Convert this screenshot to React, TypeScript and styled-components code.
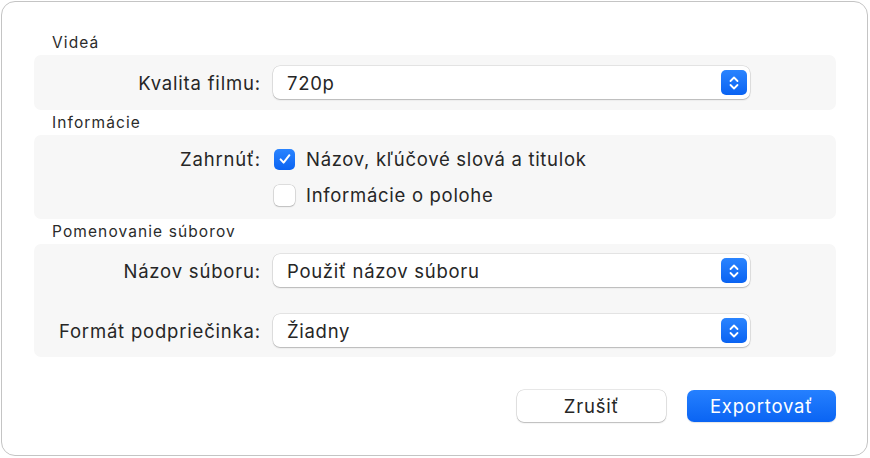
import styled, { createGlobalStyle } from "styled-components";

const GlobalStyle = createGlobalStyle`
  html, body {
    margin: 0;
    padding: 0;
    background: #ffffff;
  }
  body {
    font-family: Inter, "Liberation Sans", sans-serif;
    color: #262626;
  }
`;

const StepperIcon = () => (
  <svg width="12" height="16" viewBox="0 0 12 16" fill="none">
    <path d="M2.5 6 L6 2.5 L9.5 6" stroke="#fff" strokeWidth="1.8" strokeLinecap="round" strokeLinejoin="round" />
    <path d="M2.5 10 L6 13.5 L9.5 10" stroke="#fff" strokeWidth="1.8" strokeLinecap="round" strokeLinejoin="round" />
  </svg>
);

const CheckIcon = () => (
  <svg width="14" height="14" viewBox="0 0 14 14" fill="none">
    <path d="M2.6 7.4 L5.6 10.6 L11.4 3.2" stroke="#fff" strokeWidth="2" strokeLinecap="round" strokeLinejoin="round" />
  </svg>
);

const Select = ({ value }: { value: string }) => (
  <SelectBox>
    <SelectValue>{value}</SelectValue>
    <Stepper>
      <StepperIcon />
    </Stepper>
  </SelectBox>
);

const Checkbox = ({ checked, label }: { checked?: boolean; label: string }) => (
  <CheckRow>
    <Box $checked={checked}>{checked && <CheckIcon />}</Box>
    <CheckLabel>{label}</CheckLabel>
  </CheckRow>
);

const App = () => {
  return (
    <>
      <GlobalStyle />
      <Dialog>
        <SectionTitle>Videá</SectionTitle>
        <Group $pad="11px">
          <Row>
            <Label>Kvalita filmu:</Label>
            <Select value="720p" />
          </Row>
        </Group>

        <SectionTitle>Informácie</SectionTitle>
        <Group $pad="13px">
          <Row>
            <Label>Zahrnúť:</Label>
            <Checkbox checked label="Názov, kľúčové slová a titulok" />
          </Row>
          <Row $gap="14px">
            <Label />
            <Checkbox label="Informácie o polohe" />
          </Row>
        </Group>

        <SectionTitle>Pomenovanie súborov</SectionTitle>
        <Group $pad="10px">
          <Row>
            <Label>Názov súboru:</Label>
            <Select value="Použiť názov súboru" />
          </Row>
          <Row $gap="27px">
            <Label>Formát podpriečinka:</Label>
            <Select value="Žiadny" />
          </Row>
        </Group>

        <Footer>
          <Button>Zrušiť</Button>
          <Button $primary>Exportovať</Button>
        </Footer>
      </Dialog>
    </>
  );
};

export default App;

const Dialog = styled.div`
  box-sizing: border-box;
  margin: 1px 0 0 1px;
  width: 867px;
  height: 455px;
  border: 1.5px solid #c4c4c4;
  border-radius: 14px;
  background: #ffffff;
  padding: 32px 31px 0 32px;
  display: flex;
  flex-direction: column;
`;

const SectionTitle = styled.div`
  font-size: 15.5px;
  line-height: 18px;
  letter-spacing: 1.1px;
  color: #2b2b2b;
  padding-left: 18px;
  margin-bottom: 3px;
  margin-top: 4px;
  &:first-child {
    margin-top: 0;
  }
`;

const Group = styled.div<{ $pad: string }>`
  background: #f7f7f7;
  border-radius: 7px;
  padding: ${(p) => p.$pad} 0;
  display: flex;
  flex-direction: column;
`;

const Row = styled.div<{ $gap?: string }>`
  display: grid;
  grid-template-columns: 226px 477px;
  column-gap: 13px;
  align-items: center;
  margin-top: ${(p) => p.$gap || "0"};
`;

const Label = styled.div`
  text-align: right;
  font-size: 18.5px;
  letter-spacing: 0.8px;
  line-height: 22px;
  color: #262626;
  margin-right: -0.8px;
`;

const SelectBox = styled.div`
  box-sizing: border-box;
  height: 33px;
  background: #ffffff;
  border-radius: 7px;
  box-shadow: 0 0 0 0.5px rgba(0, 0, 0, 0.15), 0 1px 1.5px rgba(0, 0, 0, 0.2);
  display: flex;
  align-items: center;
  padding: 0 3px 0 14px;
`;

const SelectValue = styled.div`
  flex: 1;
  font-size: 18.5px;
  letter-spacing: 0.7px;
  color: #262626;
`;

const Stepper = styled.div`
  width: 26px;
  height: 25px;
  border-radius: 5px;
  background: linear-gradient(#2a84ff, #0a63f2);
  display: flex;
  align-items: center;
  justify-content: center;
`;

const CheckRow = styled.div`
  display: flex;
  align-items: center;
  gap: 11px;
`;

const Box = styled.div<{ $checked?: boolean }>`
  box-sizing: border-box;
  width: 21px;
  height: 21px;
  border-radius: 5px;
  margin-left: 1px;
  display: flex;
  align-items: center;
  justify-content: center;
  background: ${(p) => (p.$checked ? "linear-gradient(#2a84ff, #0a63f2)" : "#ffffff")};
  box-shadow: ${(p) =>
    p.$checked ? "none" : "0 0 0 0.5px rgba(0, 0, 0, 0.2), 0 1px 1.5px rgba(0, 0, 0, 0.15)"};
`;

const CheckLabel = styled.div`
  font-size: 18.5px;
  letter-spacing: 0.7px;
  line-height: 22px;
  color: #262626;
`;

const Footer = styled.div`
  display: flex;
  justify-content: flex-end;
  gap: 21px;
  margin-top: 33px;
`;

const Button = styled.button<{ $primary?: boolean }>`
  box-sizing: border-box;
  width: 149px;
  height: 32px;
  border: none;
  border-radius: 7px;
  font-family: Inter, "Liberation Sans", sans-serif;
  font-size: 18.5px;
  letter-spacing: 0.8px;
  color: ${(p) => (p.$primary ? "#ffffff" : "#262626")};
  background: ${(p) => (p.$primary ? "linear-gradient(#2580ff, #0a64f3)" : "#ffffff")};
  box-shadow: ${(p) =>
    p.$primary
      ? "0 1px 1px rgba(0, 0, 0, 0.1)"
      : "0 0 0 0.5px rgba(0, 0, 0, 0.18), 0 1px 1.5px rgba(0, 0, 0, 0.2)"};
`;
